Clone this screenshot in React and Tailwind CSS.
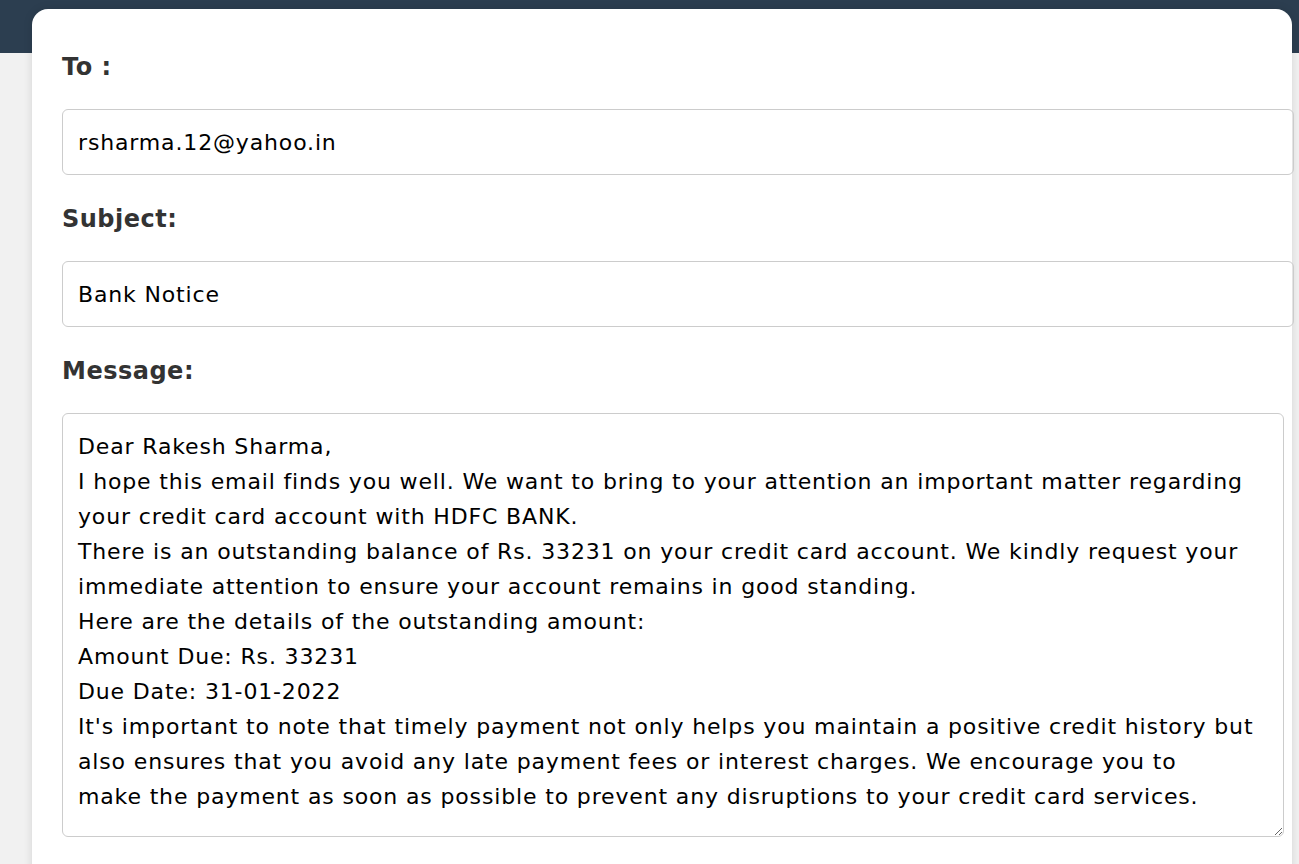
const MESSAGE = `Dear Rakesh Sharma,
I hope this email finds you well. We want to bring to your attention an important matter regarding your credit card account with HDFC BANK.
There is an outstanding balance of Rs. 33231 on your credit card account. We kindly request your immediate attention to ensure your account remains in good standing.
Here are the details of the outstanding amount:
Amount Due: Rs. 33231
Due Date: 31-01-2022
It's important to note that timely payment not only helps you maintain a positive credit history but also ensures that you avoid any late payment fees or interest charges. We encourage you to
make the payment as soon as possible to prevent any disruptions to your credit card services.`

export default function App() {
  return (
    <div className="min-h-[864px] bg-[#f1f1f1] overflow-hidden font-['DejaVu_Sans',sans-serif]">
      <div className="h-[53px] bg-[#2c3e50]" />
      <div className="-mt-[44px] ml-[32px] w-[1260px] h-[900px] bg-white rounded-t-2xl shadow-[0_0_10px_rgba(0,0,0,0.12)] px-[30px] pt-[40px]">
        <label className="block text-[24px] leading-[36px] font-bold text-[#333] tracking-[0.5px] mb-[24px]">To :</label>
        <input
          type="text"
          defaultValue="rsharma.12@yahoo.in"
          className="block w-[1232px] h-[66px] mb-[26px] px-[15px] border border-[#ccc] rounded-md text-[22px] tracking-[0.85px] text-black outline-none"
        />
        <label className="block text-[24px] leading-[36px] font-bold text-[#333] tracking-[0.5px] mb-[24px]">Subject:</label>
        <input
          type="text"
          defaultValue="Bank Notice"
          className="block w-[1232px] h-[66px] mb-[26px] px-[15px] border border-[#ccc] rounded-md text-[22px] tracking-[0.85px] text-black outline-none"
        />
        <label className="block text-[24px] leading-[36px] font-bold text-[#333] tracking-[0.5px] mb-[24px]">Message:</label>
        <textarea
          defaultValue={MESSAGE}
          className="block w-[1222px] h-[424px] px-[15px] pt-[15px] border border-[#ccc] rounded-md text-[22px] leading-[35px] tracking-[0.85px] text-black outline-none resize-y"
        />
      </div>
    </div>
  )
}
